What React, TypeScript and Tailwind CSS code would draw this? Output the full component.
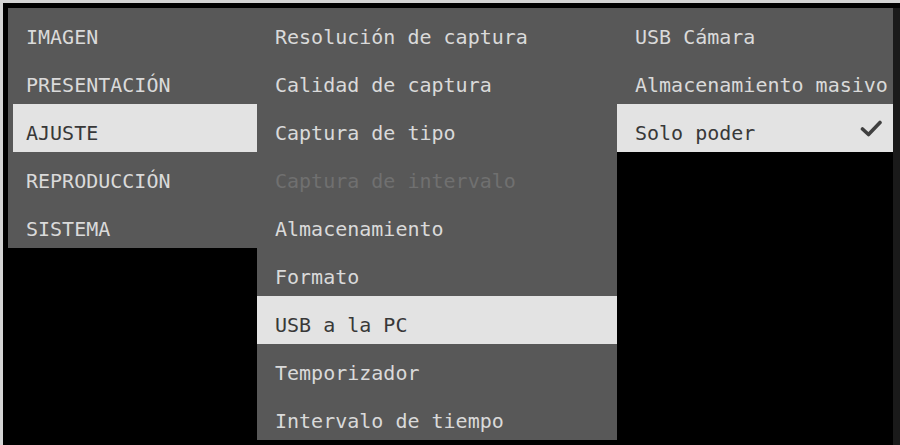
import clsx from 'clsx';

type Item = {
    label: string;
    selected?: boolean;
    disabled?: boolean;
    checked?: boolean;
};

const mainMenu: Item[] = [
    { label: 'IMAGEN' },
    { label: 'PRESENTACIÓN' },
    { label: 'AJUSTE', selected: true },
    { label: 'REPRODUCCIÓN' },
    { label: 'SISTEMA' },
];

const settingsMenu: Item[] = [
    { label: 'Resolución de captura' },
    { label: 'Calidad de captura' },
    { label: 'Captura de tipo' },
    { label: 'Captura de intervalo', disabled: true },
    { label: 'Almacenamiento' },
    { label: 'Formato' },
    { label: 'USB a la PC', selected: true },
    { label: 'Temporizador' },
    { label: 'Intervalo de tiempo' },
];

const usbMenu: Item[] = [
    { label: 'USB Cámara' },
    { label: 'Almacenamiento masivo' },
    { label: 'Solo poder', selected: true, checked: true },
];

function CheckMark() {
    return (
        <svg viewBox="0 0 22 17" className="h-[17px] w-[22px]" fill="none">
            <path
                d="M2.5 9 L8.5 14.5 L20 2.5"
                stroke="#404040"
                strokeWidth="3.6"
                strokeLinecap="round"
                strokeLinejoin="round"
            />
        </svg>
    );
}

function MenuColumn({ items, width, inset }: { items: Item[]; width: string; inset?: boolean }) {
    return (
        <ul className={clsx('flex flex-col bg-[#585858]', width)}>
            {items.map((item) => {
                const shifted = item.selected && inset;
                return (
                    <li
                        key={item.label}
                        className={clsx(
                            'flex h-12 items-center justify-between pr-[11px] pt-[9px]',
                            shifted ? 'ml-[5px] pl-[13px]' : 'pl-[18px]',
                            item.selected && 'bg-[#e3e3e3] text-[#383838]',
                            !item.selected && (item.disabled ? 'text-[#707070]' : 'text-[#dadada]'),
                        )}
                    >
                        <span className="whitespace-pre">{item.label}</span>
                        {item.checked && (
                            <span className="-mt-[9px]">
                                <CheckMark />
                            </span>
                        )}
                    </li>
                );
            })}
        </ul>
    );
}

export default function App() {
    return (
        <div className="h-[445px] w-[900px] overflow-hidden border-l-[3px] border-t-[3px] border-[#d4d4d4] bg-black font-['DejaVu_Sans_Mono',monospace] text-[20px] leading-none">
            <div className="flex items-start pl-[5px] pt-[5px]">
                <MenuColumn items={mainMenu} width="w-[249px]" inset />
                <MenuColumn items={settingsMenu} width="w-[360px]" />
                <MenuColumn items={usbMenu} width="w-[276px]" />
                <div className="h-[437px] w-[7px] bg-[#1a1a1a]" />
            </div>
        </div>
    );
}
